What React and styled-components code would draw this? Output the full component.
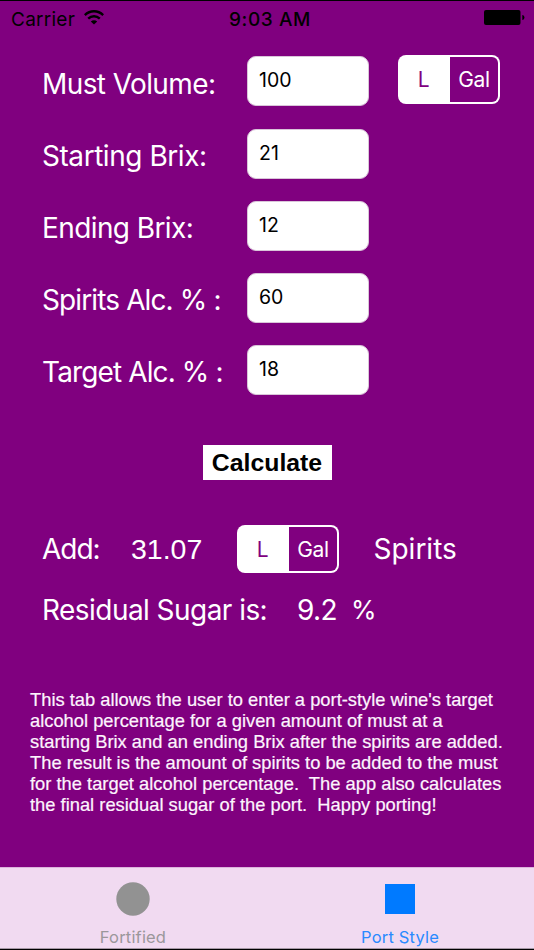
import React, { useState } from 'react'
import styled, { createGlobalStyle } from 'styled-components'

const PURPLE = '#80007f';

const GlobalStyle = createGlobalStyle`
	* {
		box-sizing: border-box;}

	body {
		margin: 0;
		background: ${PURPLE};
		font-family: Inter, 'Liberation Sans', sans-serif;}
`;

const Screen = styled.div`
	width: 534px;
	height: 950px;
	display: flex;
	flex-direction: column;
	overflow: hidden;
	background: ${PURPLE};
	border-top: 1px solid #000;
	border-bottom: 1px solid #000;
	color: white;
`;

const StatusBar = styled.header`
	display: grid;
	grid-template-columns: 218px auto 1fr;
	align-items: center;
	height: 36px;
	padding: 0 9px 0 11px;
	color: black;
	font-size: 19px;
	
	svg {
		margin-bottom: 4px;}
	
	.carrier {
		display: flex;
		align-items: center;
		gap: 9px;
		letter-spacing: 0.25px;}
	
	.battery {
		justify-self: end;}
`;

const Time = styled.span`
	font-weight: 500;
	letter-spacing: 0.6px;
`;

const Text = styled.span`
	font-family: ${p => p.$helvetica ? "'Liberation Sans', sans-serif" : 'inherit'};
	font-size: ${p => p.$size || 28}px;
	font-feature-settings: 'calt' 0;
	letter-spacing: ${p => p.$spacing || 0}px;
	line-height: 34px;
	white-space: pre;
`;

const Form = styled.main`
	flex: 1;
	display: flex;
	flex-direction: column;
	padding: 19px 0 0 42px;
`;

const Fields = styled.div`
	display: grid;
	grid-template-columns: 205px 122px 131px;
	grid-template-rows: 51px;
	grid-auto-rows: 50px;
	row-gap: 22px;
	align-items: start;
	
	${Text} {
		grid-column: 1;
		padding-top: 10px;
		&:first-child {
			padding-top: 11px;}}
	
	.unit {
		justify-self: end;
		margin-top: -1px;}
`;

const Input = styled.input`
	grid-column: 2;
	width: 122px;
	height: 50px;
	padding: 0 11px 3px;
	border: 1px solid #d9c5d9;
	border-radius: 9px;
	background: white;
	color: black;
	font: 19.5px Inter, 'Liberation Sans', sans-serif;
	outline: none;
`;

const Segments = styled.div`
	display: grid;
	grid-template-columns: 50px 1fr;
	width: 102px;
	height: ${p => p.$height}px;
	padding: 2px;
	border-radius: 8px;
	background: white;
`;

const Segment = styled.button`
	padding: 0;
	border: 0;
	border-radius: 0 6px 6px 0;
	background: ${p => p.$active ? 'white' : PURPLE};
	color: ${p => p.$active ? PURPLE : 'white'};
	font: 21px Inter, 'Liberation Sans', sans-serif;
	letter-spacing: -0.3px;
	
	&:first-child {
		padding-right: 3px;
		border-radius: 6px 0 0 6px;}
`;

const Calculate = styled.button`
	width: 129px;
	height: 35px;
	margin: 50px 0 0 160.5px;
	padding: 0;
	border: 0;
	background: white;
	color: black;
	font: bold 24.8px 'Liberation Sans', sans-serif;
`;

const AddRow = styled.div`
	display: grid;
	grid-template-columns: 89px 106px 136.5px auto;
	align-items: center;
	height: 48px;
	margin-top: 45px;
`;

const SugarRow = styled.div`
	display: grid;
	grid-template-columns: 255px 54px auto;
	margin-top: 20px;
`;

const Help = styled.p`
	margin: 62px 0 0 -12px;
	font-family: 'Liberation Sans', sans-serif;
	font-size: 18.33px;
	line-height: 21.1px;
	white-space: pre;
	color: #fdf4fd;
	-webkit-text-stroke: 0.2px #fdf4fd;
	
	span {
		display: block;}
`;

const TabBar = styled.nav`
	display: grid;
	grid-template-columns: 1fr 1fr;
	height: 82px;
	background: #f1daf1;
	border-top: 1px solid #dcb2dc;
	border-bottom: 1px solid #a698a6;
`;

const Tab = styled.button`
	display: flex;
	flex-direction: column;
	align-items: center;
	padding: 14px 1px 0 0;
	border: 0;
	background: none;
	color: ${p => p.$active ? '#2a8aff' : '#9b979b'};
	font: 16.5px/20px Inter, 'Liberation Sans', sans-serif;
	letter-spacing: 0.18px;
	
	svg {
		display: block;
		margin-bottom: 11px;}
`;

const fields = [
	{ label: 'Must Volume:', value: '100', spacing: -0.6 },
	{ label: 'Starting Brix:', value: '21', spacing: -0.45 },
	{ label: 'Ending Brix:', value: '12', spacing: -0.6 },
	{ label: 'Spirits Alc. % :', value: '60', spacing: -0.88 },
	{ label: 'Target Alc. % :', value: '18', spacing: -0.88 },
];

const helpLines = [
	"This tab allows the user to enter a port-style wine's target",
	'alcohol percentage for a given amount of must at a',
	'starting Brix and an ending Brix after the spirits are added.',
	'The result is the amount of spirits to be added to the must',
	'for the target alcohol percentage.  The app also calculates',
	'the final residual sugar of the port.  Happy porting!',
];

const WifiIcon = () => (
	<svg width='20' height='15' viewBox='0 0 20 15' fill='none' stroke='black' strokeWidth='2.4'>
		<path d='M0.8 5.1C6 -0.1 14 -0.1 19.2 5.1' />
		<path d='M4.2 8.6C7.5 5.4 12.5 5.4 15.8 8.6' />
		<path d='M10 14.6L6.8 11.4C8.6 9.7 11.4 9.7 13.2 11.4Z' fill='black' stroke='none' />
	</svg>
)

const BatteryIcon = () => (
	<svg className='battery' width='41' height='15' viewBox='0 0 41 15'>
		<rect width='36.5' height='15' rx='2' />
		<path d='M38.3 5C41.2 5.6 41.2 9.4 38.3 10Z' />
	</svg>
)

const UnitSwitch = ({ height, className }) => {
	const [unit, setUnit] = useState('L');

	return (
		<Segments $height={height} className={className}>
			{ ['L', 'Gal'].map( (item) => (
				<Segment key={item} $active={unit === item} onClick={() => setUnit(item)}>{item}</Segment>
			))}
		</Segments>
	)
}

const App = () => {
	return (
		<Screen>
			<GlobalStyle />
			<StatusBar>
				<div className='carrier'>
					<span>Carrier</span>
					<WifiIcon />
				</div>
				<Time>9:03 AM</Time>
				<BatteryIcon />
			</StatusBar>
			
			<Form>
				<Fields>
					{ fields.map( (item, index) => (
						<React.Fragment key={item.label}>
							<Text $spacing={item.spacing}>{item.label}</Text>
							<Input defaultValue={item.value} />
							{ index === 0 && <UnitSwitch className='unit' height={49} /> }
						</React.Fragment>
					))}
				</Fields>
				
				<Calculate>Calculate</Calculate>
				
				<AddRow>
					<Text $spacing={-1}>Add:</Text>
					<Text $helvetica $size={28.5}>31.07</Text>
					<UnitSwitch height={48} />
					<Text>Spirits</Text>
				</AddRow>
				
				<SugarRow>
					<Text $spacing={-0.55}>Residual Sugar is:</Text>
					<Text $spacing={-0.6}>9.2</Text>
					<Text $size={26}>%</Text>
				</SugarRow>
				
				<Help>
					{ helpLines.map( (line) => <span key={line}>{line}</span> )}
				</Help>
			</Form>
			
			<TabBar>
				<Tab>
					<svg width='34' height='34'><circle cx='17' cy='17' r='16.7' fill='#929292' /></svg>
					Fortified
				</Tab>
				<Tab $active>
					<svg width='34' height='34'><rect x='2' y='2' width='30' height='30' fill='#007aff' /></svg>
					Port Style
				</Tab>
			</TabBar>
		</Screen>
	)
}

export default App
